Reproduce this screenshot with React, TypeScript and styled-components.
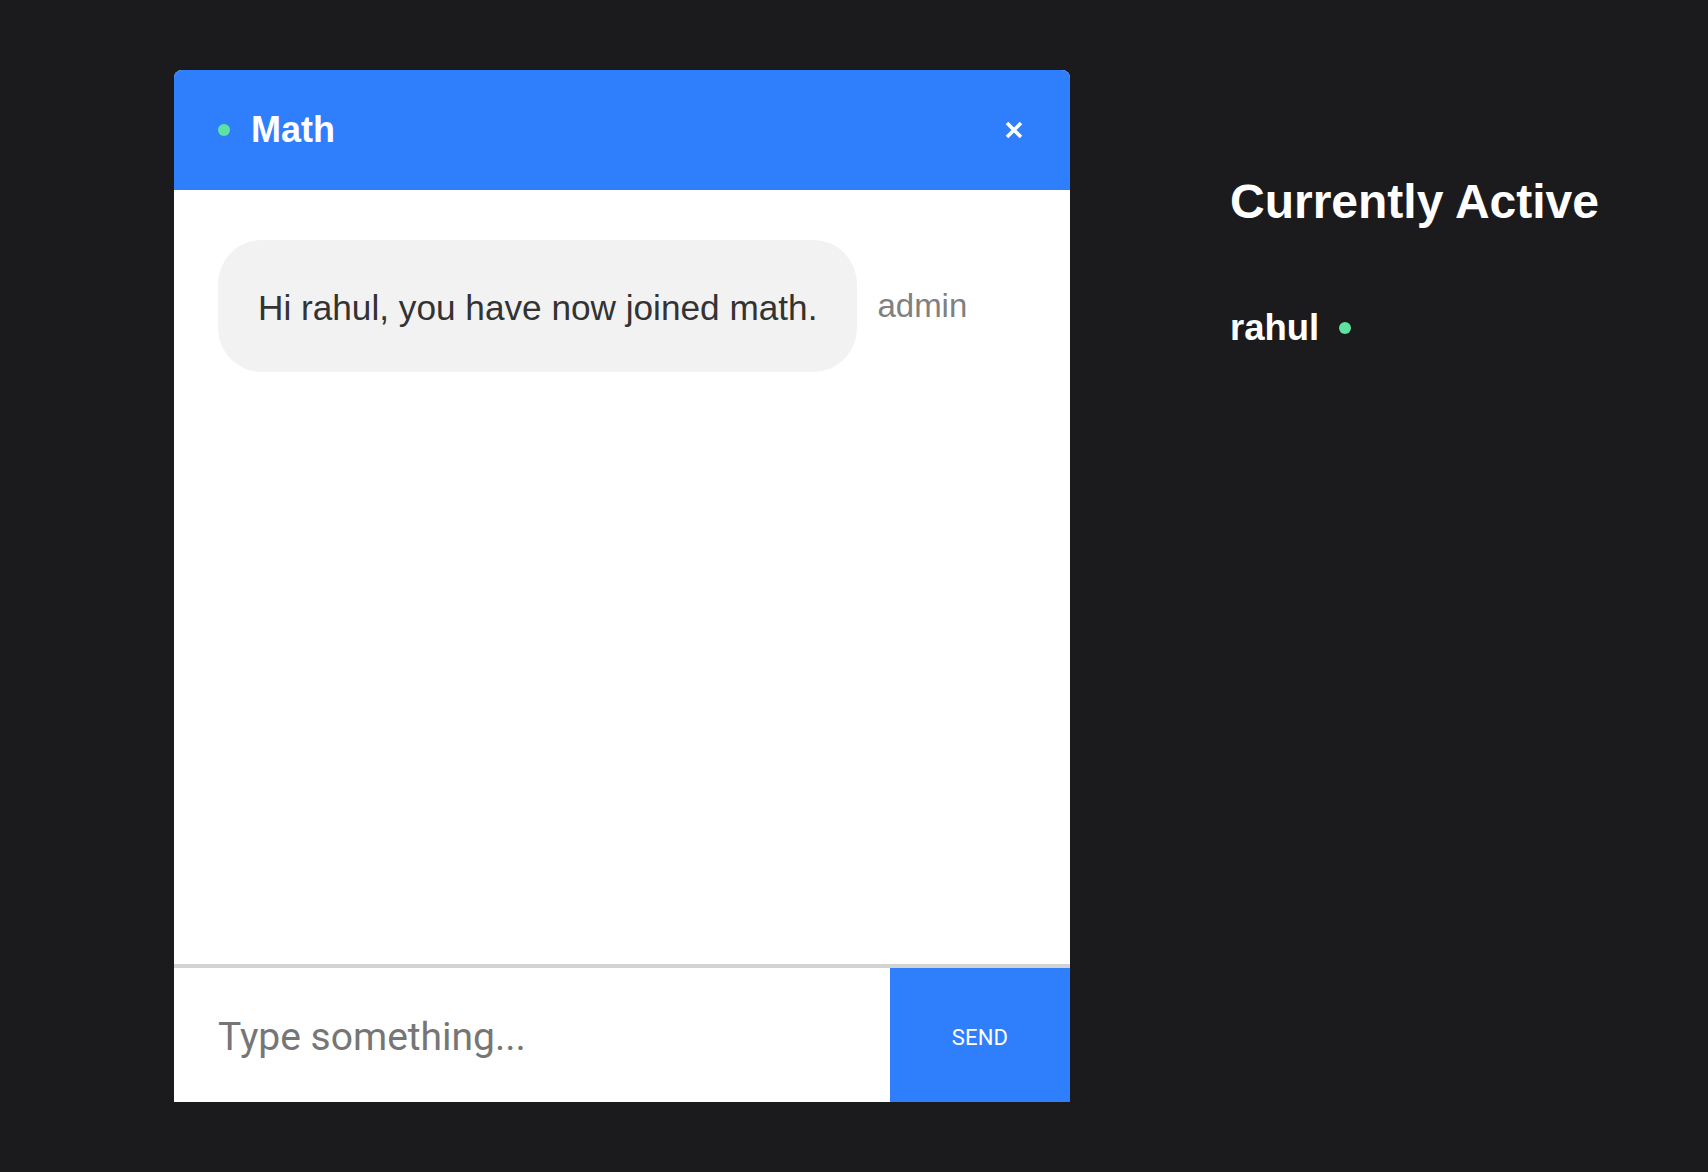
import React from "react";
import styled, { createGlobalStyle } from "styled-components";

const GlobalStyle = createGlobalStyle`
  html, body {
    margin: 0;
    padding: 0;
    background: #1b1b1d;
  }
  body {
    font-family: "Liberation Sans", Arial, Helvetica, sans-serif;
    min-height: 1172px;
  }
  * { box-sizing: border-box; }
`;

const Page = styled.div`
  display: flex;
  align-items: flex-start;
  gap: 160px;
  padding: 70px 0 0 174px;
  min-height: 1172px;
  background: #1b1b1d;
`;

const ChatBox = styled.section`
  width: 896px;
  height: 1032px;
  display: flex;
  flex-direction: column;
  background: #ffffff;
  border-radius: 8px 8px 0 0;
  overflow: hidden;
`;

const Header = styled.header`
  height: 120px;
  flex: none;
  display: flex;
  align-items: center;
  justify-content: space-between;
  padding: 0 46px 0 44px;
  background: #2f7efc;
`;

const TitleGroup = styled.div`
  display: flex;
  align-items: center;
  gap: 21px;
`;

const Dot = styled.span`
  width: 12px;
  height: 12px;
  border-radius: 50%;
  background: #5ee2a0;
  flex: none;
`;

const Title = styled.h1`
  margin: 0;
  color: #ffffff;
  font-size: 36px;
  font-weight: 700;
  line-height: 1;
`;

const CloseButton = styled.button`
  width: 20px;
  height: 20px;
  padding: 0;
  border: none;
  background: transparent;
  display: flex;
  align-items: center;
  justify-content: center;
  cursor: pointer;
`;

const Messages = styled.div`
  flex: 1;
  padding: 50px 44px;
  display: flex;
  flex-direction: column;
  gap: 20px;
`;

const MessageRow = styled.div`
  display: flex;
  align-items: center;
  gap: 20px;
`;

const Bubble = styled.div`
  background: #f2f2f2;
  color: #333333;
  font-size: 35.2px;
  line-height: 41px;
  padding: 47px 40px 44px;
  border-radius: 44px;
  white-space: nowrap;
`;

const Sender = styled.span`
  color: #808080;
  font-size: 33px;
  line-height: 1;
  margin-top: -2px;
`;

const InputRow = styled.form`
  flex: none;
  height: 138px;
  display: flex;
  border-top: 4px solid #d3d3d3;
`;

const TextInput = styled.input`
  flex: 1;
  min-width: 0;
  border: none;
  outline: none;
  padding: 4px 0 0 44px;
  font-family: Roboto, "Liberation Sans", sans-serif;
  font-size: 39px;
  color: #333;
  background: #ffffff;
  &::placeholder {
    color: #767676;
  }
`;

const SendButton = styled.button`
  width: 180px;
  flex: none;
  border: none;
  padding: 4px 0 0;
  background: #2f7efc;
  color: #ffffff;
  font-family: Roboto, "Liberation Sans", sans-serif;
  font-size: 22px;
  letter-spacing: 0.2px;
  cursor: pointer;
`;

const Sidebar = styled.aside`
  padding-top: 104px;
  display: flex;
  flex-direction: column;
  gap: 78px;
`;

const SideTitle = styled.h2`
  margin: 0;
  color: #ffffff;
  font-size: 48px;
  font-weight: 700;
  line-height: 55px;
`;

const UserRow = styled.div`
  display: flex;
  align-items: center;
  gap: 20px;
`;

const UserName = styled.span`
  color: #ffffff;
  font-size: 36.5px;
  font-weight: 700;
  line-height: 41px;
`;

export default function App() {
  return (
    <>
      <GlobalStyle />
      <Page>
        <ChatBox>
          <Header>
            <TitleGroup>
              <Dot />
              <Title>Math</Title>
            </TitleGroup>
            <CloseButton aria-label="close">
              <svg width="20" height="20" viewBox="0 0 20 20">
                <path
                  d="M3 3 L17 17 M17 3 L3 17"
                  stroke="#ffffff"
                  strokeWidth="3.6"
                  strokeLinecap="butt"
                  fill="none"
                />
              </svg>
            </CloseButton>
          </Header>
          <Messages>
            <MessageRow>
              <Bubble>Hi rahul, you have now joined math.</Bubble>
              <Sender>admin</Sender>
            </MessageRow>
          </Messages>
          <InputRow onSubmit={(e) => e.preventDefault()}>
            <TextInput placeholder="Type something..." />
            <SendButton type="submit">SEND</SendButton>
          </InputRow>
        </ChatBox>
        <Sidebar>
          <SideTitle>Currently Active</SideTitle>
          <UserRow>
            <UserName>rahul</UserName>
            <Dot />
          </UserRow>
        </Sidebar>
      </Page>
    </>
  );
}
